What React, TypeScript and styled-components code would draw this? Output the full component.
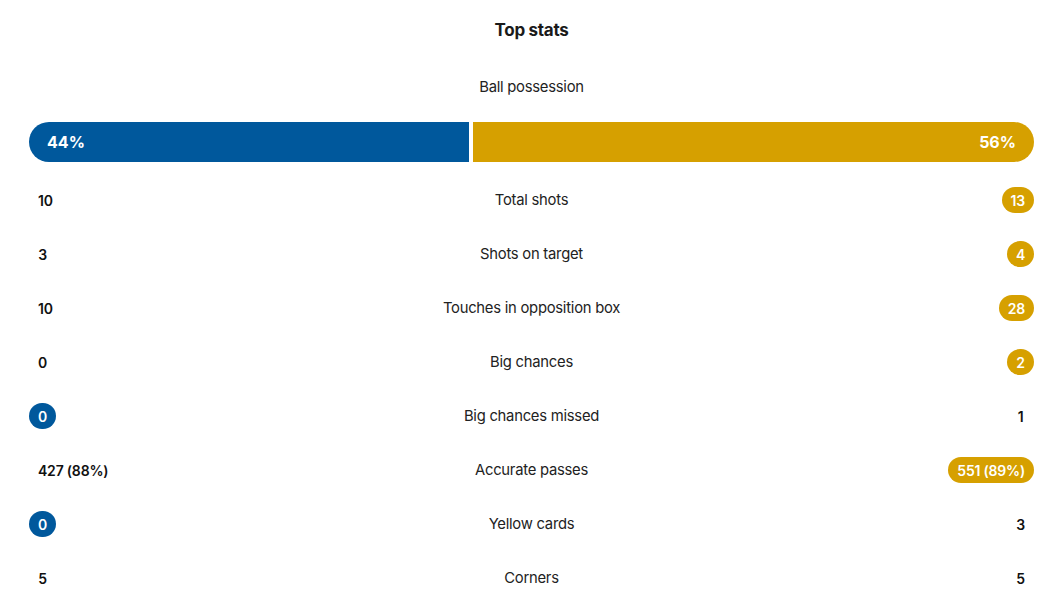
import React from "react";
import styled, { createGlobalStyle } from "styled-components";

const Global = createGlobalStyle`
  html, body { margin: 0; padding: 0; background: #fff; }
  body { font-family: Inter, "Noto Sans", sans-serif; color: #1a1a1a; -webkit-font-smoothing: antialiased; }
`;

const BLUE = "#00589c";
const GOLD = "#d6a000";

const Wrap = styled.div`
  width: 1005px;
  margin-left: 29px;
  padding-top: 18px;
  display: flex;
  flex-direction: column;
`;

const Title = styled.h2`
  margin: 0;
  font-size: 17px;
  line-height: 24px;
  font-weight: 700;
  text-align: center;
  letter-spacing: -0.3px;
`;

const Label = styled.div`
  font-size: 14.8px;
  line-height: 20px;
  color: #222;
  text-align: center;
  letter-spacing: -0.25px;
`;

const PossLabel = styled(Label)`
  margin-top: 35px;
`;

const Bar = styled.div`
  margin-top: 25px;
  margin-bottom: 11px;
  height: 40px;
  display: flex;
  justify-content: space-between;
`;

const Seg = styled.div<{ $side: "home" | "away"; $share: number }>`
  box-sizing: border-box;
  flex: 0 0 calc(${(p) => p.$share}% - 2px);
  background: ${(p) => (p.$side === "home" ? BLUE : GOLD)};
  border-radius: ${(p) => (p.$side === "home" ? "20px 0 0 20px" : "0 20px 20px 0")};
  display: flex;
  align-items: center;
  justify-content: ${(p) => (p.$side === "home" ? "flex-start" : "flex-end")};
  padding: 0 18px;
  color: #fff;
  font-weight: 700;
  font-size: 16px;
`;

const Row = styled.div`
  height: 54px;
  display: grid;
  grid-template-columns: 1fr auto 1fr;
  align-items: center;
`;

const Side = styled.div<{ $align: "left" | "right" }>`
  display: flex;
  justify-content: ${(p) => (p.$align === "left" ? "flex-start" : "flex-end")};
`;

const Value = styled.span<{ $hl?: "home" | "away" }>`
  display: inline-flex;
  align-items: center;
  justify-content: center;
  min-width: 27px;
  height: 26px;
  box-sizing: border-box;
  padding: 0 9px;
  border-radius: 13px;
  font-size: 14px;
  font-weight: 600;
  letter-spacing: -0.2px;
  background: ${(p) => (p.$hl === "home" ? BLUE : p.$hl === "away" ? GOLD : "transparent")};
  color: ${(p) => (p.$hl ? "#fff" : "#111")};
`;

type Stat = { label: string; home: string; away: string; hl?: "home" | "away" };

const stats: Stat[] = [
  { label: "Total shots", home: "10", away: "13", hl: "away" },
  { label: "Shots on target", home: "3", away: "4", hl: "away" },
  { label: "Touches in opposition box", home: "10", away: "28", hl: "away" },
  { label: "Big chances", home: "0", away: "2", hl: "away" },
  { label: "Big chances missed", home: "0", away: "1", hl: "home" },
  { label: "Accurate passes", home: "427 (88%)", away: "551 (89%)", hl: "away" },
  { label: "Yellow cards", home: "0", away: "3", hl: "home" },
  { label: "Corners", home: "5", away: "5" },
];

export default function App() {
  return (
    <>
      <Global />
      <Wrap>
        <Title>Top stats</Title>
        <PossLabel>Ball possession</PossLabel>
        <Bar>
          <Seg $side="home" $share={44}>44%</Seg>
          <Seg $side="away" $share={56}>56%</Seg>
        </Bar>
        {stats.map((s) => (
          <Row key={s.label}>
            <Side $align="left">
              <Value $hl={s.hl === "home" ? "home" : undefined}>{s.home}</Value>
            </Side>
            <Label>{s.label}</Label>
            <Side $align="right">
              <Value $hl={s.hl === "away" ? "away" : undefined}>{s.away}</Value>
            </Side>
          </Row>
        ))}
      </Wrap>
    </>
  );
}
